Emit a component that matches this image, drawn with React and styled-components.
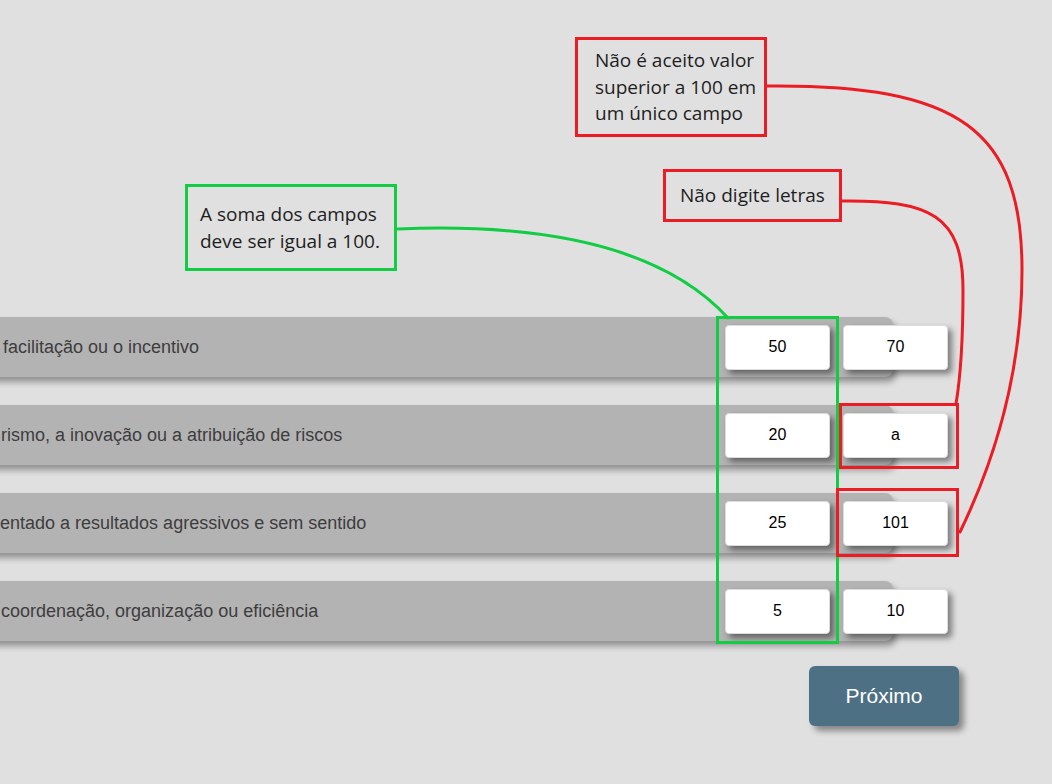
import React from "react"
import styled, { createGlobalStyle } from "styled-components"

const GlobalStyle = createGlobalStyle`
  html, body {
    margin: 0;
    background: #e0e0e0;
    overflow: hidden;
  }
`

const RED = "#ec1c24"
const GREEN = "#12cc43"

const rows = [
  { label: "facilitação ou o incentivo", indent: 3, a: "50", b: "70" },
  { label: "rismo, a inovação ou a atribuição de riscos", indent: 1, a: "20", b: "a" },
  { label: "entado a resultados agressivos e sem sentido", indent: 0, a: "25", b: "101" },
  { label: "coordenação, organização ou eficiência", indent: 1, a: "5", b: "10" },
]

const Page = styled.div`
  position: relative;
  width: 1052px;
  height: 784px;
  box-sizing: border-box;
  padding-top: 317px;
  overflow: hidden;
`

const List = styled.div`
  display: flex;
  flex-direction: column;
  gap: 28px;
`

const Bar = styled.div`
  display: flex;
  align-items: center;
  width: 923px;
  height: 60px;
  margin-left: -30px;
  background: #b3b3b3;
  border-radius: 0 8px 8px 0;
  box-shadow: 3px 5px 6px rgba(0, 0, 0, 0.35);
`

const Label = styled.span`
  flex: 1;
  padding-left: ${ p => 30 + p.indent }px;
  font-family: "Liberation Sans", Arial, sans-serif;
  font-size: 18px;
  color: #3d3d3d;
  white-space: nowrap;
  overflow: hidden;
`

const Fields = styled.div`
  display: flex;
  gap: 13px;
  margin-right: -55px;
`

const Field = styled.input`
  width: 105px;
  height: 45px;
  box-sizing: border-box;
  border: 1px solid #dcdcdc;
  border-radius: 4px;
  background: #fff;
  text-align: center;
  font-family: "Liberation Sans", Arial, sans-serif;
  font-size: 16px;
  color: #000;
  box-shadow: 4px 4px 6px rgba(0, 0, 0, 0.45);
  outline: none;
`

const Footer = styled.div`
  display: flex;
  justify-content: flex-end;
  padding-right: 93px;
  margin-top: 25px;
`

const NextButton = styled.button`
  width: 150px;
  height: 60px;
  border: none;
  border-radius: 6px;
  background: #4e7084;
  color: #fff;
  font-family: "Liberation Sans", Arial, sans-serif;
  font-size: 21px;
  box-shadow: 5px 5px 6px rgba(0, 0, 0, 0.4);
`

const Overlay = styled.div`
  position: absolute;
  inset: 0;
  pointer-events: none;
`

const Lines = styled.svg`
  position: absolute;
  inset: 0;
`

const Callout = styled.div`
  position: absolute;
  left: ${ p => p.x }px;
  top: ${ p => p.y }px;
  width: ${ p => p.w }px;
  height: ${ p => p.h }px;
  box-sizing: border-box;
  border: 3px solid ${ p => p.color };
  padding-left: ${ p => p.pad }px;
  display: flex;
  align-items: center;
  font-family: "Open Sans", "Noto Sans", sans-serif;
  font-size: 19px;
  line-height: 26.5px;
  color: #1e1e1e;
  white-space: nowrap;
`

const Highlight = styled.div`
  position: absolute;
  left: ${ p => p.x }px;
  top: ${ p => p.y }px;
  width: ${ p => p.w }px;
  height: ${ p => p.h }px;
  box-sizing: border-box;
  border: 3px solid ${ p => p.color };
`

export default function App() {
  return (
    <Page>
      <GlobalStyle />
      <List>
        { rows.map((row, i) => (
          <Bar key={ i }>
            <Label indent={ row.indent }>{ row.label }</Label>
            <Fields>
              <Field defaultValue={ row.a } />
              <Field defaultValue={ row.b } />
            </Fields>
          </Bar>
        )) }
      </List>
      <Footer>
        <NextButton>Próximo</NextButton>
      </Footer>

      <Overlay>
        <Lines width="1052" height="784" fill="none" strokeWidth="3" strokeLinecap="round">
          <path d="M398 229 C 520 224, 655 238, 728 318" stroke={ GREEN } />
          <path d="M767 86 C 960 84, 1022 130, 1022 270 C 1022 380, 990 470, 960 532" stroke={ RED } />
          <path d="M842 201 C 930 200, 963 215, 963 290 C 963 340, 960 380, 956 404" stroke={ RED } />
        </Lines>
        <Highlight x={ 716 } y={ 316 } w={ 123 } h={ 328 } color={ GREEN } />
        <Highlight x={ 839 } y={ 403 } w={ 120 } h={ 66 } color={ RED } />
        <Highlight x={ 836 } y={ 488 } w={ 123 } h={ 69 } color={ RED } />
        <Callout x={ 185 } y={ 184 } w={ 212 } h={ 87 } pad={ 12 } color={ GREEN }>
          A soma dos campos<br />deve ser igual a 100.
        </Callout>
        <Callout x={ 575 } y={ 37 } w={ 192 } h={ 100 } pad={ 17 } color={ RED }>
          Não é aceito valor<br />superior a 100 em<br />um único campo
        </Callout>
        <Callout x={ 663 } y={ 169 } w={ 179 } h={ 53 } pad={ 14 } color={ RED }>
          Não digite letras
        </Callout>
      </Overlay>
    </Page>
  )
}
